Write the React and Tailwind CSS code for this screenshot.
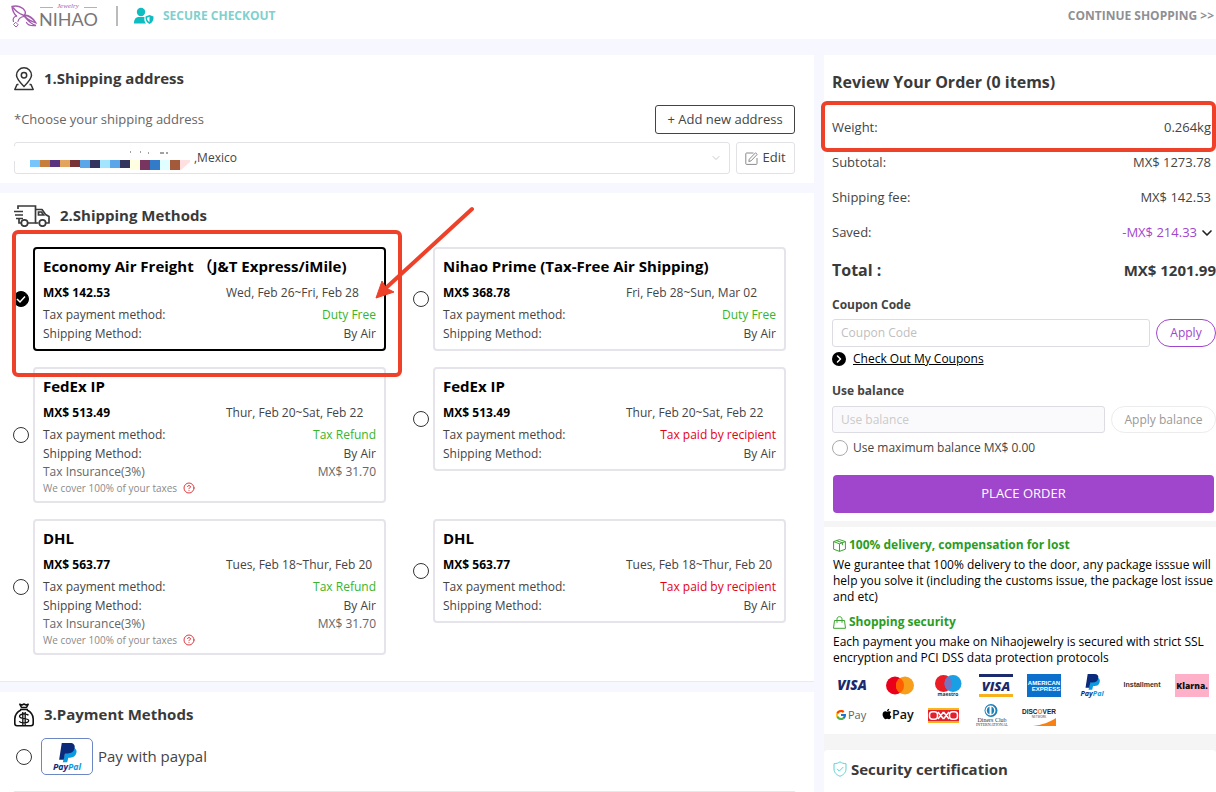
import { ChevronDown, ChevronRight, CircleHelp } from "lucide-react";
import { FaApple } from "react-icons/fa";
import { FcGoogle } from "react-icons/fc";

const OPTIONS = [
  {
    id: "economy",
    name: "Economy Air Freight （J&T Express/iMile)",
    price: "MX$ 142.53",
    dates: "Wed, Feb 26~Fri, Feb 28",
    tax: "Duty Free",
    selected: true,
    annotated: true,
  },
  {
    id: "prime",
    name: "Nihao Prime (Tax-Free Air Shipping)",
    price: "MX$ 368.78",
    dates: "Fri, Feb 28~Sun, Mar 02",
    tax: "Duty Free",
  },
  {
    id: "fedex-refund",
    name: "FedEx IP",
    price: "MX$ 513.49",
    dates: "Thur, Feb 20~Sat, Feb 22",
    tax: "Tax Refund",
    insurance: "MX$ 31.70",
  },
  {
    id: "fedex",
    name: "FedEx IP",
    price: "MX$ 513.49",
    dates: "Thur, Feb 20~Sat, Feb 22",
    tax: "Tax paid by recipient",
    unpaid: true,
  },
  {
    id: "dhl-refund",
    name: "DHL",
    price: "MX$ 563.77",
    dates: "Tues, Feb 18~Thur, Feb 20",
    tax: "Tax Refund",
    insurance: "MX$ 31.70",
  },
  {
    id: "dhl",
    name: "DHL",
    price: "MX$ 563.77",
    dates: "Tues, Feb 18~Thur, Feb 20",
    tax: "Tax paid by recipient",
    unpaid: true,
  },
];

const RADIO =
  "size-4 shrink-0 appearance-none rounded-full border border-[#333] bg-white checked:border-black checked:bg-black";

function Logo() {
  return (
    <svg width="90" height="26" viewBox="0 0 90 26" className="overflow-visible" role="img" aria-label="Nihao Jewelry">
      <g fill="none" stroke="#a45cae" strokeWidth="1.500" strokeLinecap="round">
        <path d="M1 3.500C6 2 12 4 14 8c.8 1.500.5 3-.5 4.500M1 3.500c.5 4 1.500 7 4.500 9.500M2 4c2 4 6 6.500 11 8.500" />
        <path d="M5.500 13C2.500 14 1.500 16 2.500 18.500M13 13.500C9 14 7.500 16 7 18.500" strokeWidth="1.200" />
        <path d="M13 12.500c4-1.500 10 3 12 7.500-3-1-7-2-12-7M13 13c3 3.500 6 8 12 9.500-4 .5-8 0-9.500-3M13.500 12.500c4 0 8 3 10.500 6" strokeWidth="1.300" />
        <path d="M5 19.500l2.200 2.300L5 24l-2.200-2.200z" strokeWidth="1" />
      </g>
      <path d="M29 4.500h13M73 4.500h13" stroke="#c9a3cf" strokeWidth="1" />
      <text x="46" y="5" fontSize="7" fontWeight="400" fontStyle="italic" fill="#a45cae" fontFamily="Liberation Serif, serif">
        Jewelry
      </text>
      <text x="28" y="23" fontSize="18" fontWeight="400" fill="#777" fontFamily="Lato, sans-serif">
        NIHAO
      </text>
    </svg>
  );
}

function UserShield() {
  return (
    <svg width="20" height="18" viewBox="0 0 20 18" aria-hidden="true">
      <circle cx="7" cy="5" r="4.200" fill="#0fbcc0" />
      <path d="M0 16.500c0-4.500 2-6.500 5-6.500h5.500c-.5 2.500 0 5 1.500 6.500z" fill="#0fbcc0" />
      <path d="M15.500 8l4 1.500c.3 3.500-1 6-4 7.500-3-1.500-4.300-4-4-7.500z" fill="#0fbcc0" />
      <path d="M15.500 9.800v5.300c-1.700-1-2.500-2.300-2.500-4.400z" fill="#fff" />
    </svg>
  );
}

function PinIcon() {
  return (
    <svg width="20" height="24" viewBox="0 0 20 24" fill="none" stroke="#333" strokeWidth="1.500" aria-hidden="true">
      <path d="M10 19.500C5 14.500 2.500 11.500 2.500 8.300a7.500 7.500 0 0 1 15 0c0 3.200-2.500 6.200-7.500 11.200z" />
      <circle cx="10" cy="8.300" r="2.700" />
      <path d="M4.500 17.500H3L.8 22.500h18.400L17 17.500h-1.500" strokeLinejoin="round" />
    </svg>
  );
}

function TruckIcon() {
  return (
    <svg width="36" height="22" viewBox="0 0 36 22" fill="none" stroke="#3a3a3a" strokeWidth="1.700" aria-hidden="true">
      <path d="M4 4V1h17.500v17H14M7 18H5v-4.500M0 6.500h9M1 10h8M2 13.500h7" />
      <path d="M21.500 4.500h6.500l3.500 5 3.500 2V18h-3M24.500 18h-3" strokeLinejoin="round" />
      <path d="M24.500 7h3l2 3h-5z" />
      <circle cx="10.500" cy="18" r="3.200" />
      <circle cx="28.500" cy="18" r="3.200" />
    </svg>
  );
}

function MoneyBagIcon() {
  return (
    <svg width="20" height="24" viewBox="0 0 20 24" fill="none" stroke="#111" strokeWidth="1.600" aria-hidden="true">
      <path d="M7.500 4.500L5.800 1.200l2.200.7 2-.9 2 .9 2.200-.7-1.700 3.300z" strokeLinejoin="round" />
      <path d="M6 6.500h8M7 7C3 9 .8 12 .8 16v4.500c0 1.500.8 2.200 2.200 2.200h14c1.400 0 2.200-.7 2.200-2.200V16c0-4-2.200-7-6.200-9" />
      <path d="M14.500 12.300c-.8-.9-2-1.300-4.500-1.300-2.600 0-4.500.8-4.500 2.300 0 3.400 9.200 1.200 9.200 4.300 0 1.600-1.900 2.300-4.700 2.300-2.400 0-4-.5-4.800-1.500M8.800 9v13M11.200 9v13" strokeWidth="1.300" />
    </svg>
  );
}

function EditIcon() {
  return (
    <svg width="13" height="13" viewBox="0 0 13 13" fill="none" stroke="#8a8a8a" strokeWidth="1" aria-hidden="true">
      <path d="M8.500 1H1.500a.7.700 0 0 0-.7.700v10a.7.700 0 0 0 .7.700h9.800a.7.700 0 0 0 .7-.7V6" />
      <path d="M3.800 9.500l.5-2.300L10.500.8l1.700 1.600L6 8.900z" />
    </svg>
  );
}

function CubeIcon() {
  return (
    <svg width="13" height="13" viewBox="0 0 13 13" fill="none" stroke="#3aa52f" strokeWidth="1" strokeLinejoin="round" aria-hidden="true">
      <path d="M6.500.6l5.900 2v7.600l-5.900 2.200-5.900-2.200V2.600z" />
      <path d="M.6 2.600l5.900 2.200 5.900-2.200M6.500 4.800v7.600M3.500 1.600l5.900 2.200v2.400" />
    </svg>
  );
}

function BagIcon() {
  return (
    <svg width="13" height="13" viewBox="0 0 13 13" fill="none" stroke="#3aa52f" strokeWidth="1" aria-hidden="true">
      <path d="M1.500 4.500h10l1 7.800H.5z" />
      <path d="M4 6.800V3.200C4 1.600 5 .7 6.500.7S9 1.600 9 3.200v3.600" />
    </svg>
  );
}

function ShieldIcon() {
  return (
    <svg width="14" height="16" viewBox="0 0 14 16" fill="none" stroke="#5fd0d6" strokeWidth="1" aria-hidden="true">
      <path d="M7 .8c1.500 1.200 3.500 1.800 6 1.900V8c0 3.500-2.500 5.800-6 7.300C3.500 13.800 1 11.500 1 8V2.700C3.500 2.600 5.500 2 7 .8z" />
      <path d="M4 7.800l2.300 2.300L10.300 6" />
    </svg>
  );
}

function PaypalMark({ width, height }) {
  return (
    <svg width={width} height={height} viewBox="0 0 34 32" className="overflow-visible" role="img" aria-label="PayPal">
      <path d="M16 5h8c3.500 1 4.500 3.500 3.700 6.500-.9 3.700-3.600 5.300-7.200 5.300h-2l-1.300 5.200h-5z" fill="#0a9be0" />
      <path d="M11 0h9.500c4 0 6 2.300 5.200 6-.8 4-3.700 5.900-8 5.900h-3L13.200 19H8z" fill="#0b2a7b" />
      <text x="17" y="31" textAnchor="middle" fontSize="10" fontWeight="700" fontStyle="italic" fontFamily="Open Sans, sans-serif" fill="#0b2a7b">
        Pay<tspan fill="#0a9be0">Pal</tspan>
      </text>
    </svg>
  );
}

function Badge({ label, width = 34, children }) {
  return (
    <svg width={width} height="23" viewBox={`0 0 ${width} 23`} role="img" aria-label={label}>
      {children}
    </svg>
  );
}

function PaymentBadges() {
  return (
    <div className="pr-1">
      <div className="flex gap-[14px] pl-0.5">
        <Badge label="Visa">
          <text x="17" y="16" fontSize="13.500" textAnchor="middle" fontWeight="800" fontStyle="italic" fontFamily="Open Sans, sans-serif" fill="#1a2a6c">VISA</text>
        </Badge>
        <Badge label="Mastercard">
          <circle cx="12" cy="11.500" r="9" fill="#eb001b" />
          <circle cx="22" cy="11.500" r="9" fill="#f79e1b" />
          <path d="M17 4a9 9 0 0 1 0 15a9 9 0 0 1 0-15z" fill="#ff5f00" />
        </Badge>
        <Badge label="Maestro">
          <circle cx="12.500" cy="9.500" r="8.500" fill="#eb1c26" />
          <circle cx="22" cy="9.500" r="8.500" fill="#1a9fe5" />
          <path d="M17.200 2.500a8.500 8.500 0 0 1 0 14a8.500 8.500 0 0 1 0-14z" fill="#7673c0" />
          <text x="17" y="22" fontSize="5" textAnchor="middle" fontWeight="700" fontFamily="Open Sans, sans-serif" fill="#333">maestro</text>
        </Badge>
        <Badge label="Visa Debit">
          <path d="M0 0h34v3H0z" fill="#1a2a6c" />
          <path d="M0 20h34v3H0z" fill="#f7b21b" />
          <text x="17" y="16.500" fontSize="13" textAnchor="middle" fontWeight="800" fontStyle="italic" fontFamily="Open Sans, sans-serif" fill="#1a2a6c">VISA</text>
        </Badge>
        <Badge label="American Express">
          <path d="M0 0h34v23H0z" fill="#0b6fcb" />
          <text x="17" y="10.500" fontSize="6" textAnchor="middle" fontWeight="800" fontFamily="Liberation Sans, sans-serif" fill="#fff">AMERICAN</text>
          <text x="19" y="17" fontSize="6" textAnchor="middle" fontWeight="800" fontFamily="Liberation Sans, sans-serif" fill="#fff">EXPRESS</text>
        </Badge>
        <PaypalMark width={34} height={23} />
        <Badge label="Installment" width={38}>
          <text x="19" y="13" fontSize="7" textAnchor="middle" fontWeight="700" fontFamily="Liberation Sans, sans-serif" fill="#333">Installment</text>
        </Badge>
        <Badge label="Klarna">
          <path d="M0 0h34v23H0z" fill="#ffb0c9" />
          <text x="17" y="14.500" fontSize="8.500" textAnchor="middle" fontWeight="800" fontFamily="Open Sans, sans-serif" fill="#111">Klarna.</text>
        </Badge>
      </div>
      <div className="mt-[7px] flex gap-[13px] pl-px">
        <Badge label="Google Pay">
          <g transform="translate(1 5)"><FcGoogle size={12} /></g>
          <text x="14" y="15" fontSize="11" fontFamily="Open Sans, sans-serif" fill="#5f6368">Pay</text>
        </Badge>
        <Badge label="Apple Pay">
          <g transform="translate(0 4)"><FaApple size={12} color="#000" /></g>
          <text x="11" y="15" fontSize="12.500" fontWeight="600" fontFamily="Open Sans, sans-serif" fill="#111">Pay</text>
        </Badge>
        <Badge label="Oxxo">
          <path d="M0 4h31v15H0z" fill="#f8b81c" />
          <path d="M0 6h31v11H0z" fill="#e3202b" />
          <g fill="none" stroke="#fff" strokeWidth="1.500">
            <rect x="1.500" y="7.800" width="8" height="7.500" rx="3" />
            <rect x="21.500" y="7.800" width="8" height="7.500" rx="3" />
            <path d="M10 8l5.500 7M15.500 8l-5.500 7M15.500 8l5.500 7M21 8l-5.500 7" />
          </g>
        </Badge>
        <Badge label="Diners Club">
          <circle cx="16" cy="6.500" r="6.500" fill="#1b7fb8" />
          <circle cx="15.500" cy="6.500" r="5" fill="#fff" />
          <path d="M14.500 2.500a4.300 4.300 0 0 0 0 8zM16.500 2.500a4.300 4.300 0 0 1 0 8z" fill="#1b7fb8" />
          <text x="17" y="18" fontSize="6" textAnchor="middle" fontFamily="Liberation Serif, serif" fill="#333">Diners Club</text>
          <text x="17" y="22" fontSize="4" textAnchor="middle" fontFamily="Liberation Serif, serif" fill="#333">INTERNATIONAL</text>
        </Badge>
        <Badge label="Discover">
          <text x="17" y="10" fontSize="6.500" textAnchor="middle" fontWeight="700" fontFamily="Liberation Sans, sans-serif" fill="#222">
            DISC<tspan fill="#f47216">O</tspan>VER
          </text>
          <text x="17" y="14" fontSize="3" textAnchor="middle" fontFamily="Open Sans, sans-serif" fill="#444">NETWORK</text>
          <path d="M11 22c9-1 17-4 23-8v8z" fill="#f98014" />
        </Badge>
      </div>
    </div>
  );
}

function Arrow() {
  return (
    <svg
      className="pointer-events-none absolute -top-[42px] left-[360px] z-20"
      width="104"
      height="98"
      viewBox="0 0 104 98"
      aria-hidden="true"
    >
      <path d="M99 4L14 82" stroke="#ee4129" strokeWidth="4" strokeLinecap="round" />
      <path d="M3 93L9 76l4 7 8 4z" fill="#ee4129" stroke="#ee4129" strokeLinejoin="round" />
    </svg>
  );
}

function ShippingOption({ option }) {
  return (
    <div className="relative flex items-center gap-1">
      <div className="relative flex shrink-0">
        <input
          id={option.id}
          type="radio"
          name="shipping"
          defaultChecked={option.selected}
          className={`peer ${RADIO}`}
        />
        <svg
          className="pointer-events-none absolute inset-0 hidden peer-checked:block"
          width="16"
          height="16"
          viewBox="0 0 16 16"
          fill="none"
          stroke="#fff"
          strokeWidth="1.500"
          aria-hidden="true"
        >
          <path d="M4 8l3 3 5-5.500" />
        </svg>
      </div>
      <label
        htmlFor={option.id}
        className={`block min-w-0 flex-1 rounded border-2 px-2 pt-1.5 pb-1.5 text-[12px] text-[#444] ${
          option.selected ? "border-black" : "border-[#e4e4ea]"
        }`}
      >
        <span className="block text-[15px] leading-[22px] font-bold whitespace-nowrap text-black">{option.name}</span>
        <span className="mt-1.5 grid grid-cols-[183px_1fr] leading-5">
          <b className="text-black">{option.price}</b>
          <span className="whitespace-nowrap">{option.dates}</span>
        </span>
        <span className="mt-0.5 flex justify-between leading-5">
          <span>Tax payment method:</span>
          <span className={option.unpaid ? "text-[#e60012]" : "text-[#36b52d]"}>{option.tax}</span>
        </span>
        <span className="flex justify-between leading-[18px]">
          <span>Shipping Method:</span>
          <span>By Air</span>
        </span>
        {option.insurance && (
          <>
            <span className="flex justify-between leading-[18px] text-[#666]">
              <span>Tax Insurance(3%)</span>
              <span>{option.insurance}</span>
            </span>
            <span className="flex items-center gap-1.5 text-[10px] leading-[14px] text-[#8a8a8a]">
              We cover 100% of your taxes
              <CircleHelp size={12} color="#e0383e" strokeWidth={2} />
            </span>
          </>
        )}
      </label>
      {option.annotated && (
        <>
          <div className="pointer-events-none absolute -top-[17px] -right-4 -bottom-[26px] -left-px z-10 rounded-md border-4 border-[#ee4129]" />
          <Arrow />
        </>
      )}
    </div>
  );
}

function MaskedAddress() {
  const colors = [
    "#78c5fb", "#c77d3c", "#5b3480", "#e2a45f", "#783337", "#5aa6e8", "#34355f", "#a3e5ff",
    "#5aa6e8", "#34355f", "#feffe0", "#78355f", "#327bc8", "#e0feff", "#a35a3a", "#ffe0e0",
  ];
  return (
    <svg className="pointer-events-none absolute top-0 left-0" width="196" height="32" viewBox="0 0 196 32" aria-hidden="true">
      <path d="M0 4h3v15H0z" fill="#fff" />
      {colors.map((c, i) => (
        <rect key={i} x={16 + i * 10} y="18" width="10" height={i < 5 ? 7 : i < 10 ? 8 : 10} fill={c} />
      ))}
      <path d="M167 28l9-8v8z" fill="#fff" />
      <path d="M116 10h1M126 10h1M134 11h1M146 11h4M152 11h2" stroke="#444" />
    </svg>
  );
}

function SummaryRow({ label, children }) {
  return (
    <div className="flex h-[35px] items-center justify-between pr-[5px]">
      <span>{label}</span>
      <span className="flex items-center">{children}</span>
    </div>
  );
}

export default function App() {
  return (
    <div className="flex min-h-screen flex-col bg-[#f7f7ff] font-['Open_Sans','Noto_Sans_CJK_SC',sans-serif] text-[13px] text-[#444]">
      <header className="flex h-[39px] items-center bg-white pr-0.5 pb-[7px] pl-[11px] text-[12px] font-bold">
        <Logo />
        <span className="ml-[15px] h-5 w-0.5 bg-[#bbb]" />
        <span className="ml-4 flex items-center gap-[9px] text-[#7fd0cf]">
          <UserShield />
          SECURE CHECKOUT
        </span>
        <a href="#shop" className="ml-auto text-[#8f8f94]">
          CONTINUE SHOPPING &gt;&gt;
        </a>
      </header>

      <div className="flex flex-1 gap-2.5 pt-4">
        <main className="flex min-w-0 flex-1 flex-col gap-2.5">
          <section className="bg-white pt-3 pr-[19px] pb-[9px] pl-3.5">
            <h2 className="flex h-6 items-center gap-2.5 text-[15px] leading-6 font-bold text-[#3a3a3a]">
              <PinIcon />
              <span className="pb-[3px]">1.Shipping address</span>
            </h2>
            <div className="mt-3.5 flex h-[29px] items-center justify-between">
              <label htmlFor="address" className="text-[#666]">
                *Choose your shipping address
              </label>
              <button className="h-full w-[140px] rounded-[3px] border border-[#444]">+ Add new address</button>
            </div>
            <div className="mt-2 flex h-8 gap-1.5">
              <div className="relative min-w-0 flex-1">
                <select
                  id="address"
                  className="h-full w-full appearance-none rounded-[3px] border border-[#e2e2e6] bg-white pl-[179px] text-[12px] text-[#444]"
                >
                  <option>,Mexico</option>
                </select>
                <MaskedAddress />
                <ChevronDown className="pointer-events-none absolute top-2.5 right-2" size={12} color="#b5b5b5" strokeWidth={1.5} />
              </div>
              <button className="flex w-[59px] items-center justify-center gap-1 rounded-[3px] border border-[#e2e2e6]">
                <EditIcon />
                Edit
              </button>
            </div>
          </section>

          <section className="border-b border-[#eaeaea] bg-white pt-[11px] pr-7 pb-[26px] pl-[13px]">
            <h2 className="flex h-6 items-center gap-2.5 pl-px text-[15px] leading-6 font-bold text-[#3a3a3a]">
              <TruckIcon />
              <span className="pb-[3px]">2.Shipping Methods</span>
            </h2>
            <div className="mt-[19px] grid grid-cols-2 items-start gap-x-[27px] gap-y-4">
              {OPTIONS.map((o) => (
                <ShippingOption key={o.id} option={o} />
              ))}
            </div>
          </section>

          <section className="flex-1 bg-white pt-[11px] pr-[19px] pl-3.5">
            <h2 className="flex h-6 items-center gap-2.5 text-[15px] leading-6 font-bold text-[#3a3a3a]">
              <MoneyBagIcon />
              <span className="pb-[3px]">3.Payment Methods</span>
            </h2>
            <div className="mt-[11px] flex items-center border-b border-[#e8e8e8] pb-4 pl-0.5">
              <input id="paypal" type="radio" name="payment" className={RADIO} />
              <label htmlFor="paypal" className="flex items-center gap-[5px] pl-[9px] text-[15px]">
                <span className="flex h-[37px] w-[52px] items-center justify-center rounded-[5px] border border-[#6d86c4]">
                  <PaypalMark width={30} height={28} />
                </span>
                Pay with paypal
              </label>
            </div>
          </section>
        </main>

        <aside className="flex w-[392px] shrink-0 flex-col bg-[#f5f5f5]">
          <section className="bg-white pt-[15px] pb-2 pl-2">
            <h2 className="text-[16px] leading-6 font-bold text-[#3a3a3a]">Review Your Order (0 items)</h2>
            <div className="mt-4">
              <div className="relative">
                <SummaryRow label="Weight:">0.264kg</SummaryRow>
                <div className="pointer-events-none absolute -top-[9px] right-0 -bottom-[7px] -left-[11px] rounded-md border-4 border-[#ee4129]" />
              </div>
              <SummaryRow label="Subtotal:">MX$ 1273.78</SummaryRow>
              <SummaryRow label="Shipping fee:">MX$ 142.53</SummaryRow>
              <SummaryRow label="Saved:">
                <span className="mr-0.5 text-[#a046cd]">-MX$ 214.33</span>
                <ChevronDown size={16} color="#222" strokeWidth={2.5} className="-mr-1" />
              </SummaryRow>
            </div>
            <div className="flex h-10 items-center justify-between text-[#3a3a3a]">
              <b className="text-[16px]">Total :</b>
              <b className="text-[15px]">MX$ 1201.99</b>
            </div>

            <div className="text-[12px]">
              <label htmlFor="coupon" className="mt-1.5 block leading-[18px] font-bold">
                Coupon Code
              </label>
              <div className="mt-[5px] flex h-7 gap-1.5">
                <input
                  id="coupon"
                  placeholder="Coupon Code"
                  className="min-w-0 flex-1 rounded-[3px] border border-[#dcdce2] px-2 placeholder:text-[#c0c0c0]"
                />
                <button className="w-[60px] rounded-full border border-[#a046cd] text-[#a046cd]">Apply</button>
              </div>
              <a href="#coupons" className="mt-1 flex h-4 items-center gap-[7px] text-black underline">
                <span className="flex size-3.5 items-center justify-center rounded-full bg-black">
                  <ChevronRight size={12} color="#fff" strokeWidth={3} />
                </span>
                Check Out My Coupons
              </a>
              <label htmlFor="balance" className="mt-[15px] block leading-[18px] font-bold">
                Use balance
              </label>
              <div className="mt-1.5 flex h-[27px] gap-1.5">
                <input
                  id="balance"
                  disabled
                  placeholder="Use balance"
                  className="min-w-0 flex-1 rounded-[3px] border border-[#dcdce2] bg-[#fafafc] px-2 placeholder:text-[#cacaca]"
                />
                <button disabled className="w-[105px] rounded-full border border-[#ececec] text-[#999]">
                  Apply balance
                </button>
              </div>
              <div className="mt-[7px] flex h-4 items-center gap-[5px]">
                <input
                  id="max"
                  type="radio"
                  className="size-4 shrink-0 appearance-none rounded-full border border-[#aaa] bg-white"
                />
                <label htmlFor="max">Use maximum balance MX$ 0.00</label>
              </div>
            </div>
            <div className="mt-[19px] flex pr-0.5 pl-px">
              <button className="h-[38px] flex-1 rounded bg-[#a046cd] text-white">PLACE ORDER</button>
            </div>
          </section>

          <section className="mt-1.5 bg-white pt-[9px] pb-[7px] pl-[9px] text-[12px] leading-4 text-black">
            <h3 className="flex items-center gap-[3px] leading-[18px] font-bold text-[#2a9d1f]">
              <CubeIcon />
              100% delivery, compensation for lost
            </h3>
            <p className="mt-[3px]">
              We gurantee that 100% delivery to the door, any package isssue will help you solve it (including the
              customs issue, the package lost issue and etc)
            </p>
            <h3 className="mt-2 flex items-center gap-[3px] leading-[18px] font-bold text-[#2a9d1f]">
              <BagIcon />
              Shopping security
            </h3>
            <p className="mt-[3px] mb-2">
              Each payment you make on Nihaojewelry is secured with strict SSL encryption and PCI DSS data protection
              protocols
            </p>
            <PaymentBadges />
          </section>

          <section className="mt-4 flex-1 rounded-t bg-white pt-[7px] pl-[9px]">
            <h2 className="flex h-6 items-center gap-1 text-[15px] font-bold text-[#3a3a3a]">
              <ShieldIcon />
              Security certification
            </h2>
          </section>
        </aside>
      </div>
    </div>
  );
}
